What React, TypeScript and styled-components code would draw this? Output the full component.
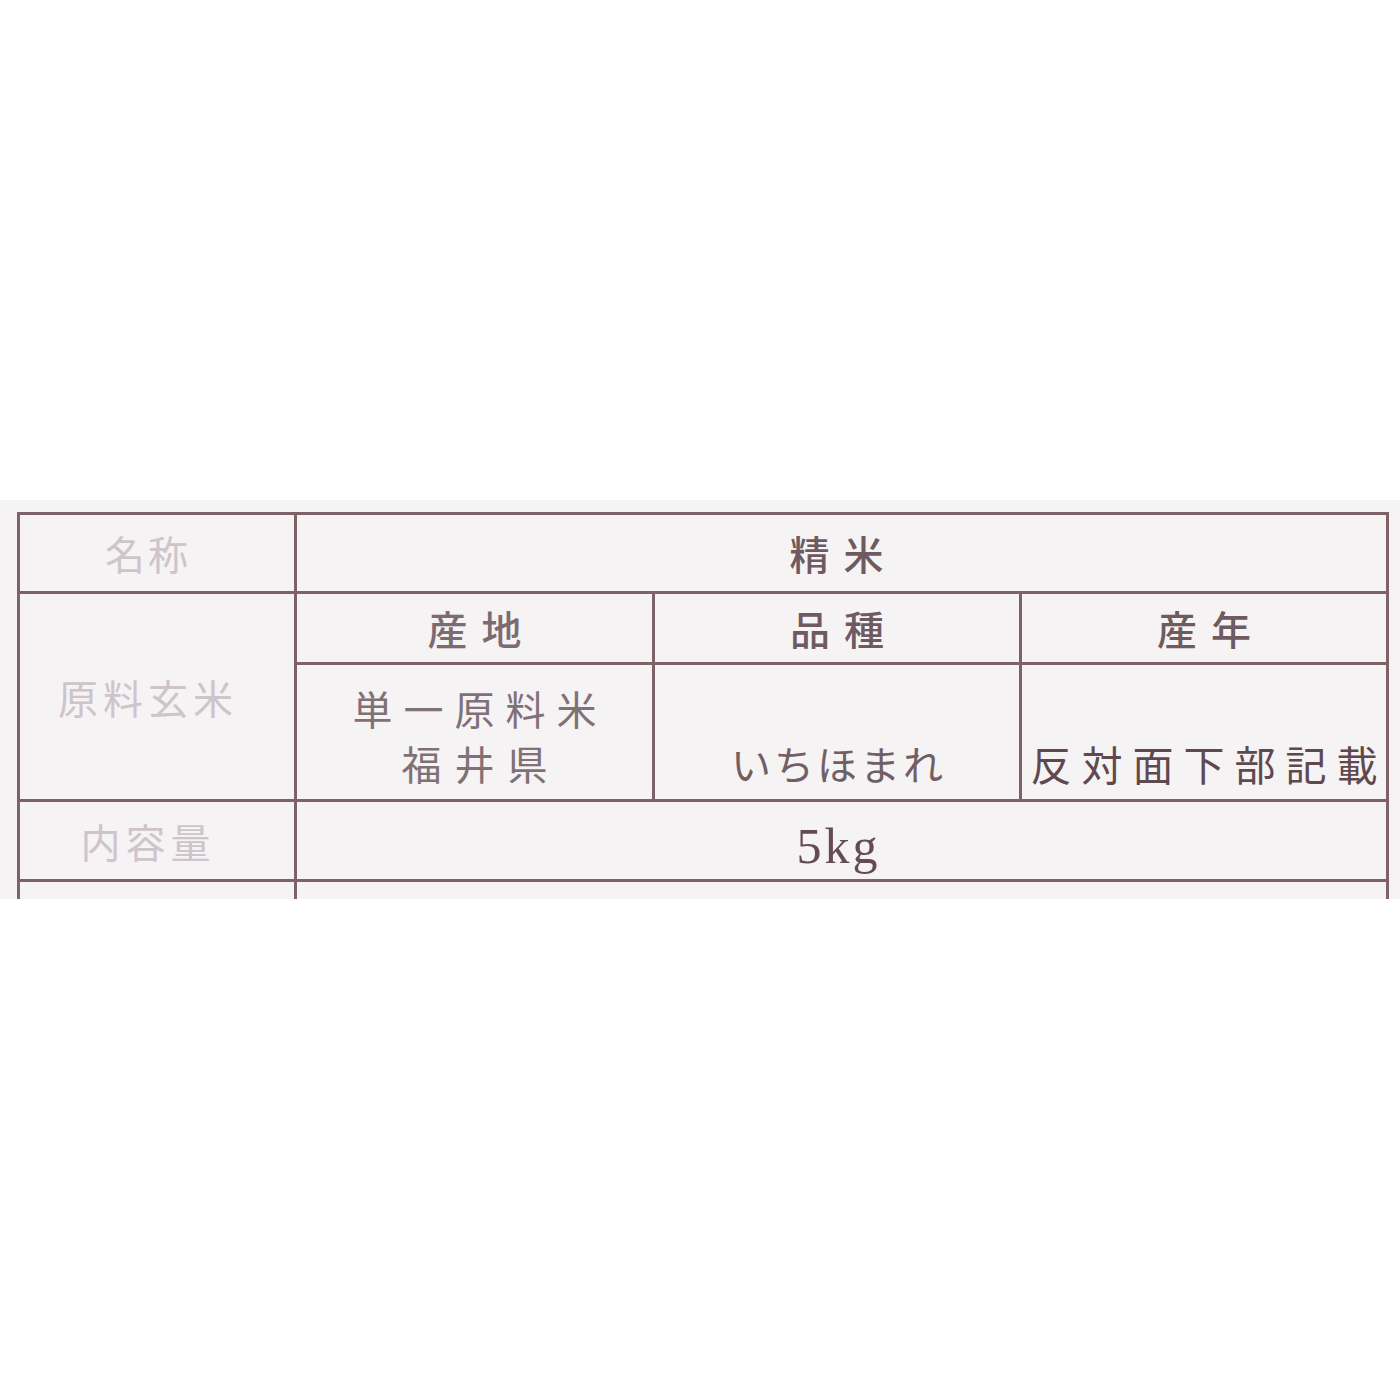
import React from "react";
import styled, { createGlobalStyle } from "styled-components";

const Global = createGlobalStyle`
  html, body { margin: 0; padding: 0; background: #ffffff; }
  body { font-family: "Noto Sans CJK JP", "Noto Sans", sans-serif; }
`;

const Page = styled.div`
  width: 1400px;
  height: 1400px;
  padding-top: 500px;
  box-sizing: border-box;
  background: #ffffff;
`;

const Label = styled.section`
  height: 399px;
  background: #f5f3f4;
  overflow: hidden;
  box-sizing: border-box;
  padding: 12px 0 0 17px;
`;

const Table = styled.div`
  display: grid;
  grid-template-columns: 274px 355px 364px 364px;
  grid-template-rows: 76px 68px 134px 77px 60px;
  gap: 3px;
  padding: 3px;
  width: max-content;
  background: #7e6268;
`;

const Cell = styled.div<{ $col?: string; $row?: string; $align?: "center" | "end" }>`
  background: #f5f3f4;
  grid-column: ${(p) => p.$col || "auto"};
  grid-row: ${(p) => p.$row || "auto"};
  display: flex;
  flex-direction: column;
  align-items: center;
  justify-content: ${(p) => (p.$align === "end" ? "flex-end" : "center")};
  padding-bottom: ${(p) => (p.$align === "end" ? "8px" : "0")};
  box-sizing: border-box;
  white-space: nowrap;
`;

const HeadText = styled.span<{ $spacing: number }>`
  font-size: 40px;
  line-height: 48px;
  color: #cdc5c9;
  letter-spacing: ${(p) => p.$spacing}px;
  margin-right: 18px;
`;

const ValueText = styled.span<{ $spacing: number; $color?: string; $light?: boolean; $size?: number }>`
  font-size: ${(p) => p.$size || 40}px;
  font-weight: ${(p) => (p.$light ? 400 : 500)};
  line-height: 55px;
  color: ${(p) => p.$color || "#6e5a60"};
  letter-spacing: ${(p) => p.$spacing}px;
  margin-right: ${(p) => -p.$spacing}px;
`;

const Amount = styled.span`
  font-family: "Liberation Serif", "DejaVu Serif", serif;
  font-size: 50px;
  line-height: 56px;
  color: #654c52;
  letter-spacing: 3px;
  margin-top: 10px;
  margin-right: 6px;
`;

export default function App() {
  return (
    <>
      <Global />
      <Page>
        <Label>
          <Table>
            <Cell $col="1" $row="1">
              <HeadText $spacing={3}>名称</HeadText>
            </Cell>
            <Cell $col="2 / 5" $row="1">
              <ValueText $spacing={14} style={{ marginLeft: -10 }}>精米</ValueText>
            </Cell>

            <Cell $col="1" $row="2 / 4">
              <HeadText $spacing={5}>原料玄米</HeadText>
            </Cell>
            <Cell $col="2" $row="2">
              <ValueText $spacing={14} $color="#7c6b70">産地</ValueText>
            </Cell>
            <Cell $col="3" $row="2">
              <ValueText $spacing={14} $color="#6e5a60">品種</ValueText>
            </Cell>
            <Cell $col="4" $row="2">
              <ValueText $spacing={14} $color="#6e5a60">産年</ValueText>
            </Cell>

            <Cell $col="2" $row="3" $align="end">
              <ValueText $light $spacing={11} $color="#7f7176">単一原料米</ValueText>
              <ValueText $light $spacing={13} $color="#7f7176">福井県</ValueText>
            </Cell>
            <Cell $col="3" $row="3" $align="end">
              <ValueText $light $spacing={3} $color="#725f64">いちほまれ</ValueText>
            </Cell>
            <Cell $col="4" $row="3" $align="end">
              <ValueText $light $size={41} $spacing={10} $color="#5f484e">反対面下部記載</ValueText>
            </Cell>

            <Cell $col="1" $row="4">
              <HeadText $spacing={5}>内容量</HeadText>
            </Cell>
            <Cell $col="2 / 5" $row="4">
              <Amount>5kg</Amount>
            </Cell>

            <Cell $col="1" $row="5" />
            <Cell $col="2 / 5" $row="5" />
          </Table>
        </Label>
      </Page>
    </>
  );
}
